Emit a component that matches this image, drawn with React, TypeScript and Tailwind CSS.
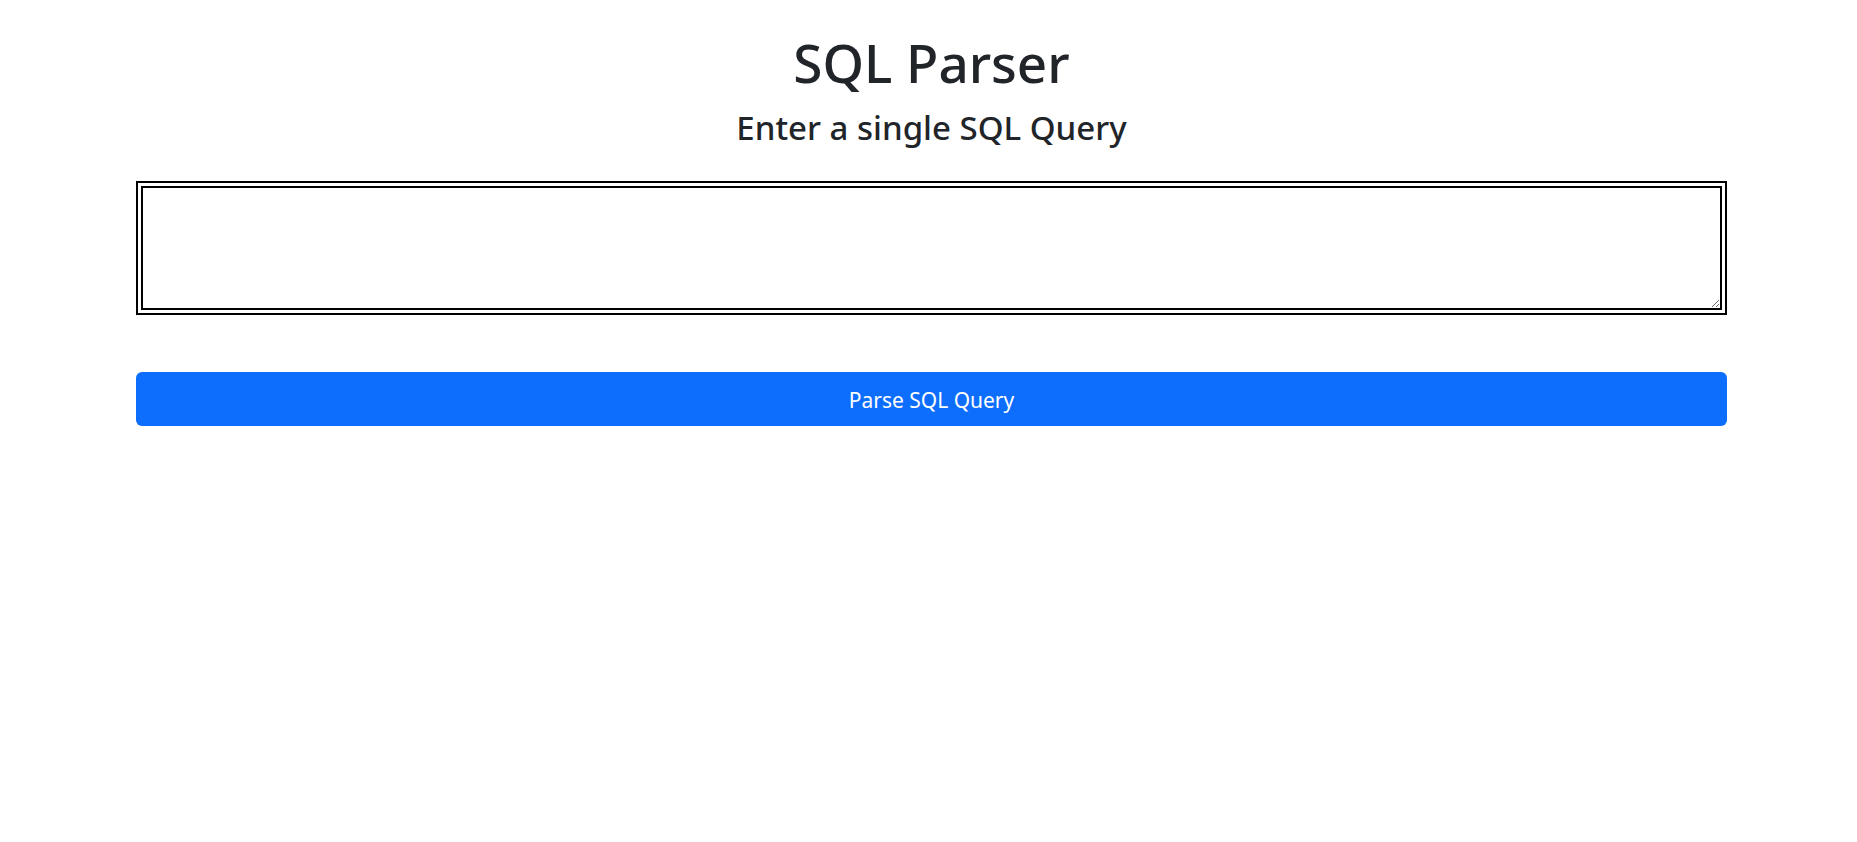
import React, { useState } from 'react';

const App: React.FC = () => {
    const [query, setQuery] = useState('');

    return (
        <div className="min-h-screen w-full bg-white text-[#212529] font-['Noto_Sans',sans-serif]">
            <div className="flex flex-col items-stretch pl-[136px] pr-[130px] pt-[31px]">
                <h1 className="h-[64px] text-center text-[53px] leading-[1.2] font-medium">SQL Parser</h1>
                <h4 className="mt-[13px] h-[40px] text-center text-[33px] leading-[1.2] font-medium">Enter a single SQL Query</h4>

                <textarea
                    className="mt-[33px] h-[134px] w-full border-[7px] border-double border-black bg-white p-1 outline-none"
                    value={query}
                    onChange={(e) => setQuery(e.target.value)}
                />

                <button
                    className="mt-[57px] h-[54px] w-full rounded-[6px] bg-[#0d6efd] pt-[3px] text-[21px] text-white"
                    onClick={() => console.log(query)}
                >
                    Parse SQL Query
                </button>
            </div>
        </div>
    );
};

export default App;
